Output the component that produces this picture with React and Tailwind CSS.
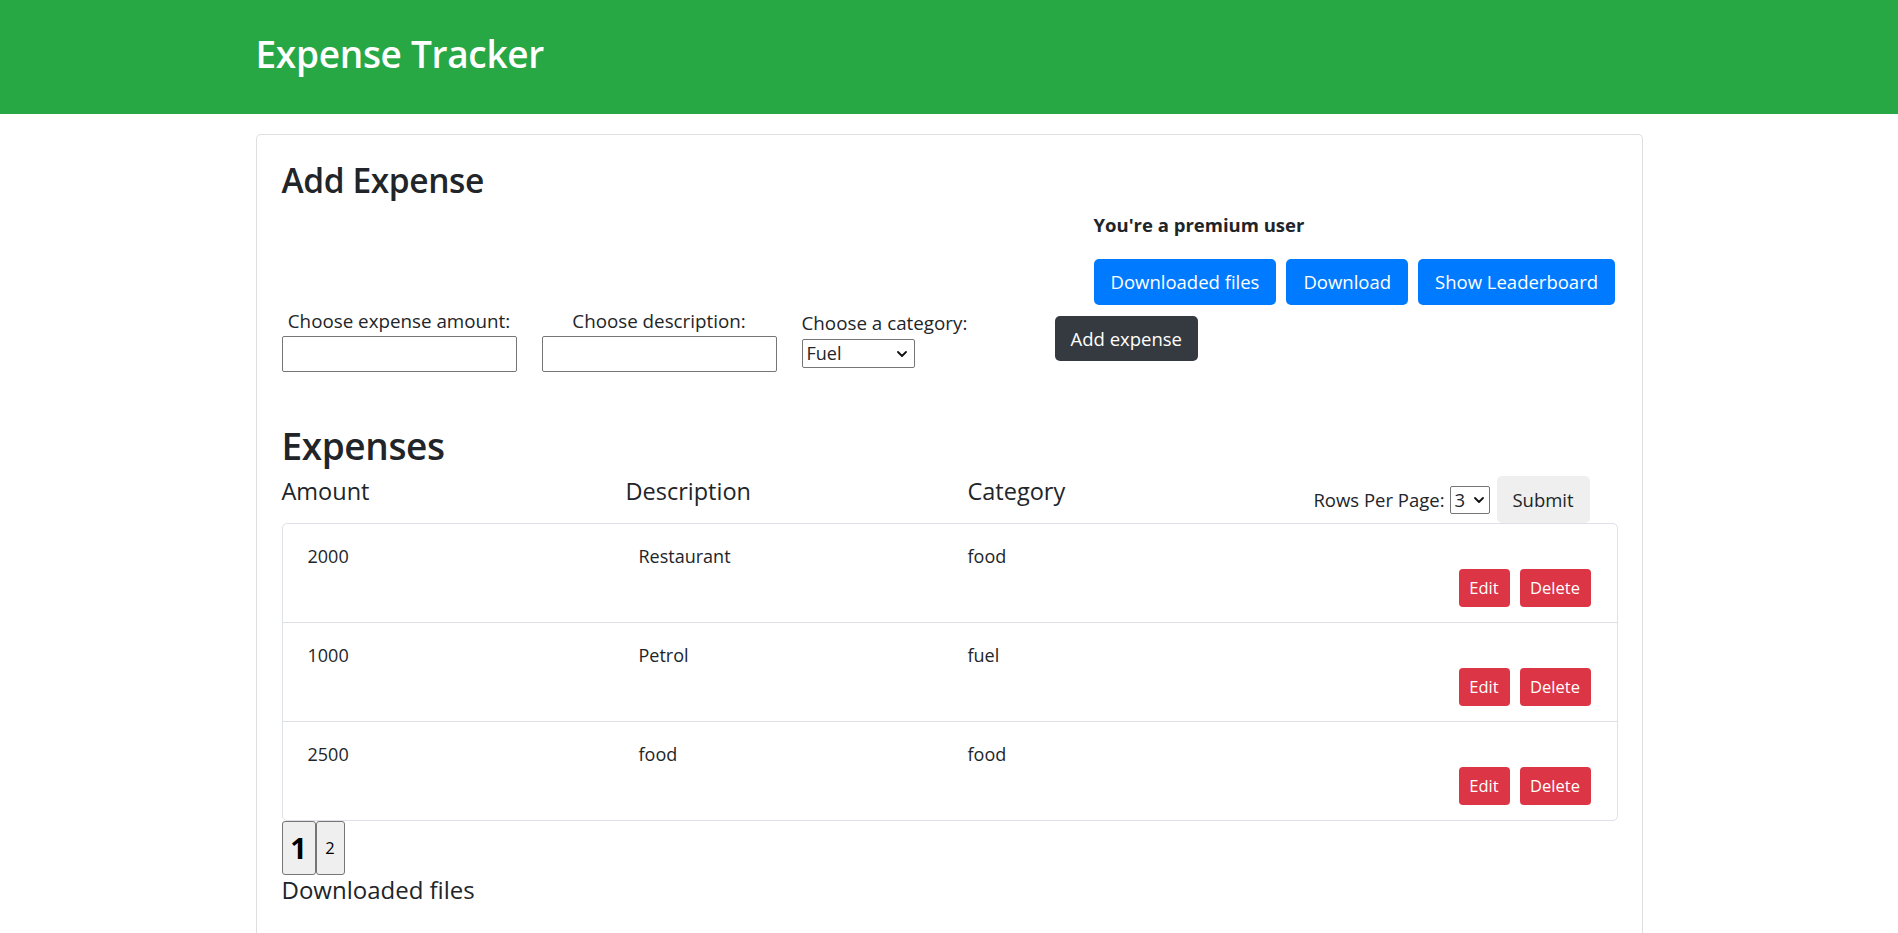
import React from "react";

const font = { fontFamily: '"Open Sans", "Noto Sans", sans-serif' };

function Chevron({ className }) {
  return (
    <svg className={className} viewBox="0 0 10 6" width="10" height="6" fill="none">
      <path d="M1 1l4 4 4-4" stroke="#111" strokeWidth="1.8" strokeLinecap="round" strokeLinejoin="round" />
    </svg>
  );
}

const rows = [
  { amount: "2000", desc: "Restaurant", cat: "food" },
  { amount: "1000", desc: "Petrol", cat: "fuel" },
  { amount: "2500", desc: "food", cat: "food" },
];

export default function App() {
  return (
    <div className="h-[933px] overflow-hidden bg-white text-[#212529]" style={font}>
      <header className="h-[114px] bg-[#28a745] flex items-center">
        <div className="w-[1387px] mx-auto pb-[6px]">
          <h1 className="text-[37px] leading-[48px] font-semibold text-white tracking-[-0.3px]">Expense Tracker</h1>
        </div>
      </header>

      <div className="w-[1387px] mx-auto mt-[20px] h-[799px] border border-b-0 border-[#dfdfdf] rounded-t-[5px] pl-[25px] pr-[24px] pt-[24px]">
        <h2 className="text-[33.5px] leading-[42px] font-semibold tracking-[-0.4px]">Add Expense</h2>

        <div className="flex justify-end">
          <div className="w-[524px]">
            <p className="mt-[12px] text-[18.5px] leading-[24px] font-bold">You're a premium user</p>
            <div className="mt-[22px] flex gap-[10px]">
              <button className="h-[46px] px-[17px] rounded-[5px] bg-[#007bff] text-white text-[18.5px]">Downloaded files</button>
              <button className="h-[46px] px-[17px] rounded-[5px] bg-[#007bff] text-white text-[18.5px]">Download</button>
              <button className="h-[46px] px-[17px] rounded-[5px] bg-[#007bff] text-white text-[18.5px]">Show Leaderboard</button>
            </div>
          </div>
        </div>

        <div className="flex items-start">
          <div className="w-[235px] mt-[2px] flex flex-col items-center">
            <label className="text-[18.8px] leading-[29px]">Choose expense amount:</label>
            <input className="w-[235px] h-[36px] border border-[#767676] rounded-[2px] bg-white" />
          </div>
          <div className="w-[235px] ml-[25px] mt-[2px] flex flex-col items-center">
            <label className="text-[18.8px] leading-[29px]">Choose description:</label>
            <input className="w-[235px] h-[36px] border border-[#767676] rounded-[2px] bg-white" />
          </div>
          <div className="w-[253px] ml-[25px] mt-[3px] flex flex-col items-start">
            <label className="text-[18.8px] leading-[30px]">Choose a category:</label>
            <div className="relative mt-[1px] w-[113px] h-[29px] border border-[#767676] rounded-[2px] flex items-center pl-[4px] text-[18px]">
              <span>Fuel</span>
              <Chevron className="absolute right-[7px] top-[11px]" />
            </div>
          </div>
          <button className="mt-[11px] h-[45px] px-[16px] rounded-[5px] bg-[#343a40] text-white text-[18.5px]">Add expense</button>
        </div>

        <h2 className="mt-[50px] text-[37px] leading-[48px] font-semibold tracking-[-0.4px]">Expenses</h2>

        <div className="flex items-start h-[53px]">
          <div className="w-[344px] pt-[6px] text-[23.5px] leading-[30px] font-medium">Amount</div>
          <div className="w-[342px] pt-[6px] text-[23.5px] leading-[30px] font-medium">Description</div>
          <div className="pt-[6px] text-[23.5px] leading-[30px] font-medium">Category</div>
          <div className="ml-auto mr-[28px] self-end flex items-center h-[47px]">
            <span className="text-[18.5px]">Rows Per Page:</span>
            <div className="relative ml-[5px] w-[40px] h-[28px] border border-[#767676] rounded-[2px] flex items-center pl-[4px] text-[18.5px]">
              <span>3</span>
              <Chevron className="absolute right-[5px] top-[10px]" />
            </div>
            <button className="ml-[7px] h-[47px] w-[93px] rounded-[5px] bg-[#efefef] text-[18.5px]">Submit</button>
          </div>
        </div>

        <div className="border border-[#dee2e6] rounded-[5px]">
          {rows.map((r, i) => (
            <div
              key={i}
              className={`pt-[20px] pb-[15px] pl-[25px] pr-[26px] ${i < rows.length - 1 ? "border-b border-[#dee2e6]" : ""}`}
            >
              <div className="flex h-[24px] items-center text-[18px]">
                <span className="w-[331px]">{r.amount}</span>
                <span className="w-[329px]">{r.desc}</span>
                <span>{r.cat}</span>
              </div>
              <div className="mt-[1px] flex justify-end gap-[10px]">
                <button className="h-[38px] w-[51px] rounded-[4px] bg-[#dc3545] text-white text-[16.5px]">Edit</button>
                <button className="h-[38px] w-[71px] rounded-[4px] bg-[#dc3545] text-white text-[16.5px]">Delete</button>
              </div>
            </div>
          ))}
        </div>

        <div className="flex h-[54px]">
          <button className="w-[34px] h-[54px] border border-[#767676] rounded-[3px] bg-[#efefef] text-[29px] font-bold text-black">1</button>
          <button className="w-[29px] h-[54px] border border-[#767676] rounded-[3px] bg-[#efefef] text-[16.5px] text-black">2</button>
        </div>

        <h5 className="text-[24px] leading-[30px] font-medium">Downloaded files</h5>
      </div>
    </div>
  );
}
